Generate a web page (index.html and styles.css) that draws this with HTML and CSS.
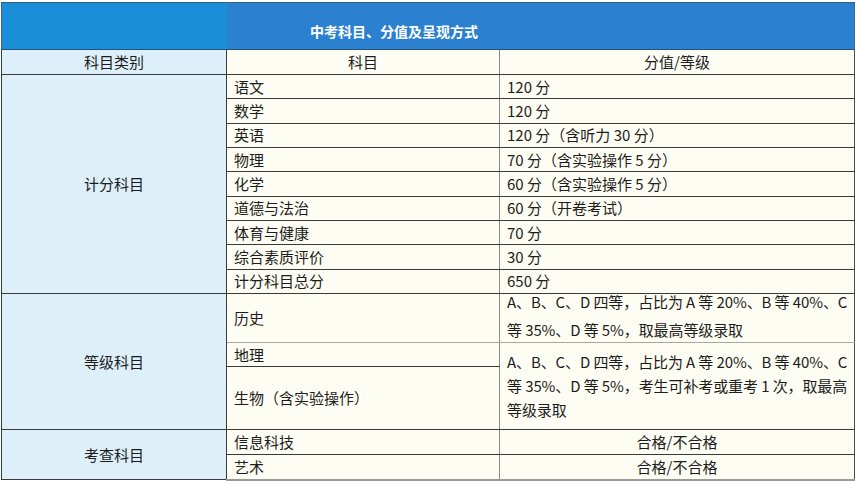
FILE: index.html
```html
<!DOCTYPE html>
<html lang="zh-CN">
<head>
<meta charset="utf-8">
<title>中考科目、分值及呈现方式</title>
<link rel="stylesheet" href="styles.css">
</head>
<body>
<table class="t">
  <colgroup><col class="c1"><col class="c2"><col class="c3"></colgroup>
  <tr class="r-title"><td class="title-l"></td><td class="title-r" colspan="2">中考科目、分值及呈现方式</td></tr>
  <tr class="r-head"><td class="cat">科目类别</td><td class="sub ctr">科目</td><td class="val ctr">分值/等级</td></tr>
  <tr class="r"><td class="cat" rowspan="9">计分科目</td><td class="sub">语文</td><td class="val">120 分</td></tr>
  <tr class="r"><td class="sub">数学</td><td class="val">120 分</td></tr>
  <tr class="r"><td class="sub">英语</td><td class="val">120 分（含听力 30 分）</td></tr>
  <tr class="r"><td class="sub">物理</td><td class="val">70 分（含实验操作 5 分）</td></tr>
  <tr class="r"><td class="sub">化学</td><td class="val">60 分（含实验操作 5 分）</td></tr>
  <tr class="r"><td class="sub">道德与法治</td><td class="val">60 分（开卷考试）</td></tr>
  <tr class="r"><td class="sub">体育与健康</td><td class="val">70 分</td></tr>
  <tr class="r"><td class="sub">综合素质评价</td><td class="val">30 分</td></tr>
  <tr class="r"><td class="sub">计分科目总分</td><td class="val">650 分</td></tr>
  <tr class="r-g1"><td class="cat" rowspan="3">等级科目</td><td class="sub soft-b">历史</td><td class="val grade soft-b"><span class="g1">A、B、C、D 四等，占比为 A 等 20%、B 等 40%、C<br>等 35%、D 等 5%，取最高等级录取</span></td></tr>
  <tr class="r-g2"><td class="sub soft-t">地理</td><td class="val grade soft-t" rowspan="2">A、B、C、D 四等，占比为 A 等 20%、B 等 40%、C<br>等 35%、D 等 5%，考生可补考或重考 1 次，取最高<br>等级录取</td></tr>
  <tr class="r-g3"><td class="sub">生物（含实验操作）</td></tr>
  <tr class="r-k"><td class="cat" rowspan="2">考查科目</td><td class="sub">信息科技</td><td class="val ctr">合格/不合格</td></tr>
  <tr class="r-k"><td class="sub">艺术</td><td class="val ctr">合格/不合格</td></tr>
</table>
</body>
</html>
```

FILE: styles.css
```css
html, body {
  margin: 0;
  padding: 0;
  background: #ffffff;
}

body {
  padding: 2px 0 0 1px;
  font-family: "Noto Sans CJK SC", "DejaVu Sans", sans-serif;
  color: #1c1c1c;
}

.t {
  border-collapse: collapse;
  table-layout: fixed;
  width: 853px;
  font-size: 15px;
}

.c1 { width: 225px; }
.c2 { width: 273px; }
.c3 { width: 355px; }

.t td {
  border: 1px solid #3a3a3a;
  padding: 0 0 0 7px;
  line-height: 20px;
  white-space: nowrap;
  vertical-align: middle;
}

.r-title { height: 47px; }
.title-l {
  background: #1b8ed8;
  border-right-color: #1b8ed8 !important;
  border-top-color: #2f5f86 !important;
  border-bottom-color: #24517a !important;
  border-left-color: #3d6a8a !important;
}
.t td.title-r {
  background: #2b81d0;
  color: #ffffff;
  font-weight: 700;
  font-size: 14px;
  padding: 10px 0 0 83px;
  border-top-color: #2f5f86;
  border-bottom-color: #24517a;
  border-right-color: #4a6478;
}

.r-head { height: 25px; }
.r { height: 24.35px; }
.r-g1 { height: 48px; }
.r-g2 { height: 24px; }
.r-g3 { height: 63px; }
.r-k { height: 25px; }

.t td.cat {
  background: #ddf0fa;
  text-align: center;
  padding: 0;
  border-left-color: #2f3f48;
}

.sub {
  background: #fefdf3;
}

.val {
  background: #fefdf3;
  border-left-color: #8a8a86 !important;
  border-right-color: #4a4a4a !important;
}

.sub {
  border-right-color: #8a8a86 !important;
}

.t td.ctr {
  text-align: center;
  padding: 0;
}

.t td.grade {
  line-height: 24px;
  letter-spacing: -0.1px;
}

.g1 {
  display: block;
  line-height: 28px;
  margin: -6px 0 -2px;
}

.t td.soft-b { border-bottom-color: #a8a8a2; }
.t td.soft-t { border-top-color: #a8a8a2; }

.r-k:last-child td {
  border-bottom: 2px solid #9a9a98;
}
```
